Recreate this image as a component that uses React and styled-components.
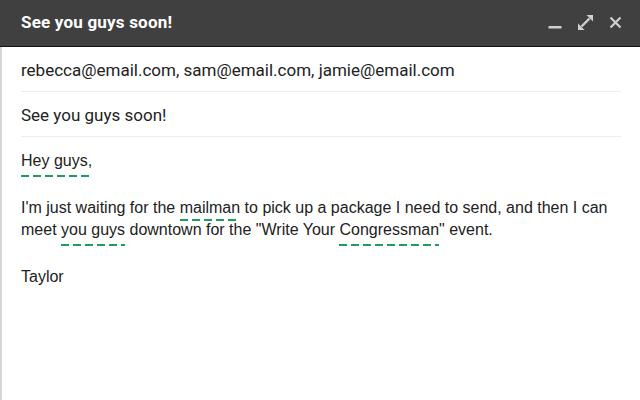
import styled, { createGlobalStyle } from 'styled-components';

const GlobalStyle = createGlobalStyle`
  html, body {
    margin: 0;
    padding: 0;
    background: #ffffff;
  }
  #root {
    width: 640px;
    height: 400px;
    overflow: hidden;
  }
`;

const Window = styled.div`
  display: flex;
  flex-direction: column;
  width: 640px;
  height: 400px;
  box-sizing: border-box;
`;

const TitleBar = styled.div`
  display: flex;
  align-items: center;
  justify-content: space-between;
  box-sizing: border-box;
  height: 47px;
  padding: 0 18px 2px 21px;
  background: #404040;
  border-bottom: 1px solid #141414;
`;

const TitleText = styled.div`
  font-family: Roboto, 'Liberation Sans', sans-serif;
  font-weight: 700;
  font-size: 17px;
  color: #ffffff;
  letter-spacing: 0.2px;
`;

const Controls = styled.div`
  display: flex;
  align-items: center;
  gap: 16px;
  color: #cfcfcf;
  svg {
    display: block;
  }
`;

const Body = styled.div`
  flex: 1;
  display: flex;
  flex-direction: column;
  border-left: 2px solid #d6d6d6;
`;

const Field = styled.div`
  display: flex;
  align-items: center;
  height: 43px;
  padding-top: 1px;
  margin: 0 19px 0 19px;
  border-bottom: 1px solid #ececec;
  font-family: Roboto, 'Liberation Sans', sans-serif;
  font-size: 17px;
  color: #222222;
`;

const Message = styled.div`
  padding: 13px 19px 0 19px;
  font-family: 'Liberation Sans', Arial, sans-serif;
  font-size: 16px;
  line-height: 22px;
  color: #222222;
`;

const Para = styled.p`
  margin: 0 0 25px 0;
`;

// dashed green flag under a word, drawn as a background strip
const Flag = styled.span`
  padding-bottom: ${(p) => p.$offset}px;
  background-image: linear-gradient(90deg, #1f9d5c 0 8px, transparent 8px 12px);
  background-size: 12px 2px;
  background-repeat: repeat-x;
  background-position: left bottom;
`;

const Minimize = () => (
  <svg width="14" height="14" viewBox="0 0 14 14">
    <rect x="0.5" y="11" width="13" height="2.5" fill="currentColor" />
  </svg>
);

const Expand = () => (
  <svg width="15" height="15" viewBox="0 0 15 15" fill="currentColor">
    <path d="M3.5 11.5l8-8" stroke="currentColor" strokeWidth="2.4" />
    <path d="M15 0v6.5L8.5 0z" />
    <path d="M0 15V8.5L6.5 15z" />
  </svg>
);

const Close = () => (
  <svg width="13" height="13" viewBox="0 0 13 13">
    <path d="M1.5 1.5l10 10M11.5 1.5l-10 10" stroke="currentColor" strokeWidth="2.2" />
  </svg>
);

const App = () => {
  return (
    <>
      <GlobalStyle />
      <Window>
        <TitleBar>
          <TitleText>See you guys soon!</TitleText>
          <Controls>
            <Minimize />
            <Expand />
            <Close />
          </Controls>
        </TitleBar>
        <Body>
          <Field>rebecca@email.com, sam@email.com, jamie@email.com</Field>
          <Field>See you guys soon!</Field>
          <Message>
            <Para>
              <Flag $offset={8}>Hey guys,</Flag>
            </Para>
            <Para>
              I'm just waiting for the <Flag $offset={5}>mailman</Flag> to pick up a package I
              need to send, and then I can meet <Flag $offset={8}>you guys</Flag> downtown for
              the "Write Your <Flag $offset={8}>Congressman</Flag>" event.
            </Para>
            <Para>Taylor</Para>
          </Message>
        </Body>
      </Window>
    </>
  );
};

export default App;
